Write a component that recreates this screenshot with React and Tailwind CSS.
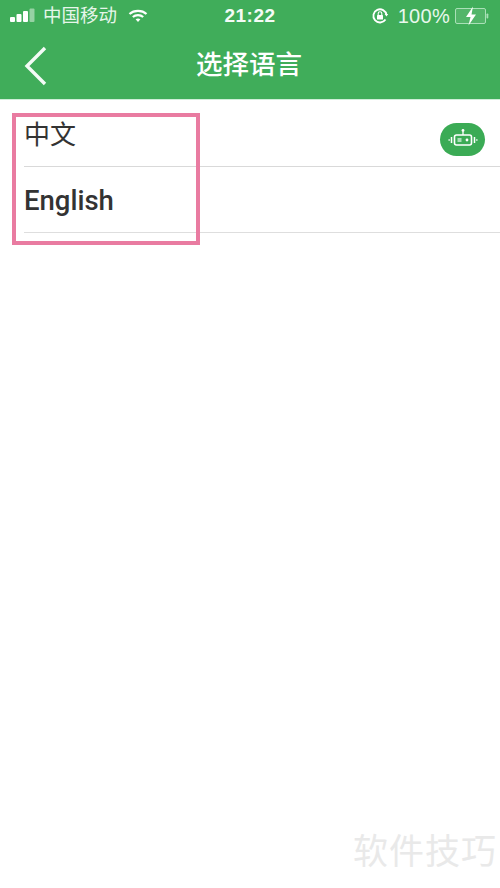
const sans = { fontFamily: '"Liberation Sans", "Noto Sans CJK SC", sans-serif' };

function Signal() {
  return (
    <svg width="26" height="18" viewBox="0 0 26 18" className="shrink-0">
      <rect x="0" y="10" width="5" height="5" rx="1" fill="#fff" />
      <rect x="6.5" y="7" width="5" height="8" rx="1" fill="#fff" />
      <rect x="13" y="4" width="5" height="11" rx="1" fill="#fff" />
      <rect x="19.5" y="1.5" width="5" height="13.5" rx="1" fill="#fff" fillOpacity="0.45" />
    </svg>
  );
}

function Wifi() {
  return (
    <svg width="20" height="14" viewBox="0 0 20 14">
      <path d="M1.5 5 C6 0.8 14 0.8 18.5 5" fill="none" stroke="#fff" strokeWidth="2.2" />
      <path d="M4.8 8 C7.6 5.6 12.4 5.6 15.2 8" fill="none" stroke="#fff" strokeWidth="2.2" />
      <path d="M7.6 10.3 L10 13 L12.4 10.3 C11 9.2 9 9.2 7.6 10.3Z" fill="#fff" />
    </svg>
  );
}

function Lock() {
  return (
    <svg width="18" height="18" viewBox="0 0 18 18">
      <path d="M14.5 12.5 A6.6 6.6 0 1 1 15.5 8" fill="none" stroke="#fff" strokeWidth="1.8" />
      <path d="M15.5 9.5 L13.6 7 L17.2 7 Z" fill="#fff" />
      <rect x="6" y="8" width="6" height="4.5" rx="0.6" fill="#fff" />
      <path d="M7.2 8 V6.6 a1.8 1.8 0 0 1 3.6 0 V8" fill="none" stroke="#fff" strokeWidth="1.1" />
    </svg>
  );
}

function Battery() {
  return (
    <svg width="34" height="20" viewBox="0 0 34 20">
      <rect x="0.5" y="2.5" width="30" height="15" rx="1.5" fill="#ffffff" fillOpacity="0.1" stroke="#a9e0b7" strokeWidth="1" />
      <rect x="31.5" y="7.5" width="1.8" height="5" rx="0.8" fill="#a9e0b7" />
      <path d="M18 0.5 L11 11 H15.5 L13.5 19.5 L21 8.5 H16.5 Z" fill="#fff" />
    </svg>
  );
}

function Robot() {
  return (
    <svg width="32" height="24" viewBox="0 0 32 24">
      <circle cx="16" cy="2.5" r="1.4" fill="#fff" />
      <path d="M16 3.5 V7" stroke="#fff" strokeWidth="1.3" />
      <rect x="7.5" y="7" width="17" height="10" rx="2" fill="none" stroke="#fff" strokeWidth="1.6" />
      <rect x="10.5" y="10" width="4" height="4" fill="#a9dfb7" />
      <circle cx="20" cy="12" r="1.4" fill="#fff" />
      <path d="M4.5 9 V15 M27.5 9 V15" stroke="#fff" strokeWidth="1.5" />
      <path d="M1.5 12 H2.8 M29.2 12 H30.5" stroke="#fff" strokeWidth="1.5" />
    </svg>
  );
}

export default function App() {
  return (
    <div className="relative w-[500px] h-[888px] bg-white overflow-hidden text-[#333333]" style={sans}>
      <header className="bg-[#40ad5a] h-[100px] flex flex-col text-white border-b border-[#cfeed8]">
        <div className="h-[32px] flex items-center pl-[10px] pr-[11px]">
          <div className="flex items-center w-[210px]">
            <Signal />
            <span className="text-[18.5px] leading-none ml-[7px] text-[#e6f6ea]">中国移动</span>
            <span className="ml-[11px]"><Wifi /></span>
          </div>
          <div className="w-[66px] -ml-[3px] text-center text-[19px] font-bold tracking-[0.5px] text-[#f4fbf6]">21:22</div>
          <div className="flex items-center flex-1 justify-end">
            <Lock />
            <span className="ml-[9px] text-[20px] leading-none tracking-[0.3px] text-[#e9f8ed]">100%</span>
            <span className="ml-[5px] flex"><Battery /></span>
          </div>
        </div>
        <div className="flex-1 flex items-center">
          <svg width="26" height="42" viewBox="0 0 26 42" className="ml-[23px]">
            <path d="M22 3 L4 21 L22 39" fill="none" stroke="#f4fbf6" strokeWidth="3.4" />
          </svg>
          <h1 className="flex-1 text-center text-[26.5px] leading-none pr-[51px] font-medium">选择语言</h1>
        </div>
      </header>

      <div>
        <div className="h-[67px] ml-[24px] border-b border-[#d9d9d9] flex items-start">
          <span className="text-[26px] leading-none mt-[22px]">中文</span>
          <span className="ml-auto mr-[15px] mt-[23px] w-[45px] h-[33px] rounded-full bg-[#3bab55] flex items-center justify-center">
            <Robot />
          </span>
        </div>
        <div className="h-[66px] ml-[24px] border-b border-[#dedede] flex items-center">
          <span className="text-[27.5px] leading-none font-medium pt-[3px]" style={{ fontFamily: 'Roboto, "Noto Sans CJK SC", sans-serif' }}>English</span>
        </div>
      </div>

      <div className="absolute left-[12px] top-[113px] w-[188px] h-[132px] border-[4px] border-[#e97ba1]" />

      <div className="absolute right-[3px] bottom-[19px] text-[35px] leading-none tracking-[1px] text-[#e9e9e9]">软件技巧</div>
    </div>
  );
}
